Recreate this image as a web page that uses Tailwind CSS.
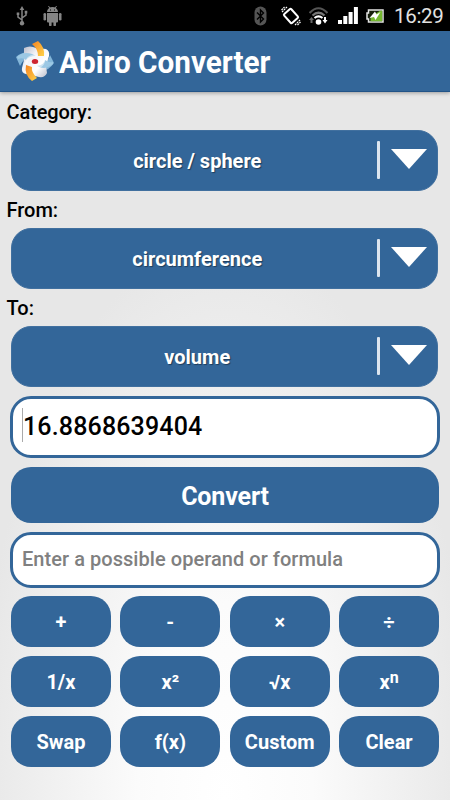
<!DOCTYPE html>
<html lang="en">
<head>
<meta charset="utf-8">
<title>Abiro Converter</title>
<script src="https://cdn.jsdelivr.net/npm/@tailwindcss/browser@4"></script>
</head>
<body class="w-[450px] h-[800px] overflow-hidden flex flex-col bg-[radial-gradient(ellipse_250px_560px_at_225px_800px,#ffffff_0%,#fbfbfb_35%,#e7e7e7_100%)] font-['Roboto','Noto_Sans',sans-serif] text-black">
<svg width="0" height="0" class="absolute"><defs>
<linearGradient id="g" x1="0" y1="0" x2="1" y2="1"><stop offset="0" stop-color="#b4b7c6"/><stop offset=".35" stop-color="#f2f2f7"/><stop offset=".65" stop-color="#fff"/><stop offset="1" stop-color="#b4b7c6"/></linearGradient>
<linearGradient id="o" x1="0" y1="0" x2="1" y2="1"><stop offset="0" stop-color="#f58220"/><stop offset="1" stop-color="#ffd34a"/></linearGradient>
</defs></svg>
<div class="h-[31px] shrink-0 bg-black flex items-center justify-between pl-4 pr-[7px]">
  <div class="flex items-center gap-[15px]">
    <svg width="12" height="20" viewBox="0 0 12 20" fill="none" stroke="#858585" stroke-width="1.5"><path d="M6 3V17M6 14L2 11V8M6 12l4-3V6"/><path d="M6 0L8.300 4H3.700ZM.7 6.500h2.600v2.600H.7zM8.700 4.800h2.600v2.600H8.700z" fill="#858585" stroke="none"/><circle cx="6" cy="17.300" r="2.200" fill="#858585" stroke="none"/></svg>
    <svg width="19" height="21" viewBox="0 0 19 21" fill="#858585"><path d="M4 7a5.500 5 0 0 1 11 0zM4 8h11v8.500a1 1 0 0 1-1 1h-1V20a1.300 1.300 0 0 1-2.600 0v-2.500H8.600V20A1.300 1.300 0 0 1 6 20v-2.500H5a1 1 0 0 1-1-1z"/><rect x="0.500" y="8" width="2.600" height="7.500" rx="1.300"/><rect x="15.900" y="8" width="2.600" height="7.500" rx="1.300"/><path d="M5.500 1L7 3.500M13.500 1L12 3.500" stroke="#858585"/><path d="M7 4.500h1v1H7zM11 4.500h1v1h-1z" fill="#000"/></svg>
  </div>
  <div class="flex items-center">
    <svg width="13" height="20" viewBox="0 0 13 20" class="mr-[15px]"><rect x="0.500" y="0.500" width="12" height="19" rx="6" fill="#555"/><path d="M3 6.500L9.500 13 6.500 16V4L9.500 7 3 13.500" fill="none" stroke="#000" stroke-width="1.400"/></svg>
    <svg width="20" height="20" viewBox="0 0 20 20" class="mr-[8px] -ml-px" fill="none" stroke="#fff"><rect x="5.200" y="4" width="9.600" height="12" rx="1.200" transform="rotate(-42 10 10)" stroke-width="2"/><path d="M1 6L6 1M0.500 4L3.500 1M14 19l5-5M16.500 19l3-3" stroke-width="1.200" stroke-dasharray="2 .7"/></svg>
    <svg width="19" height="20" viewBox="0 0 19 20" class="mr-[10px]" fill="none"><path d="M.5 7Q9.500-2.500 18.500 7" stroke="#555" stroke-width="2.200"/><path d="M3.500 9.500q6-5.500 12 0" stroke="#777" stroke-width="2.200"/><path d="M5.500 12q4-3.200 8 0" stroke="#fff" stroke-width="2.200"/><circle cx="9.500" cy="16" r="2.800" fill="#fff"/><path d="M2.500 11L5 14H3.500v3h-2v-3H0z" fill="#666"/><path d="M15 11h2v3h1.500L16 17.500 13.500 14H15z" fill="#fff"/></svg>
    <svg width="20" height="18" viewBox="0 0 20 18" class="mr-[8px]" fill="#fff"><path d="M0 13h4v4H0zM5.300 9h4v8h-4zM10.600 5h4v12h-4zM15.900 0h4v17h-4z"/></svg>
    <svg width="18" height="14" viewBox="0 0 18 14" class="mr-[10px]"><path d="M2.500 1h14.500v12H2.500V10H1V4h1.500z" fill="#171f0d" stroke="#e5e5e5" stroke-width="1.500"/><path d="M4.500 12.200V8L14 1.800h2.200v10.400z" fill="#75b830"/><path d="M3.500 9L9 2.500l1.500 3 4-2.500L9.500 11 8 8z" fill="#fff"/></svg>
    <span class="w-[49px] mt-[2px] text-[20.500px] tracking-[-0.3px] leading-none text-[#e2e2e2] whitespace-nowrap">16:29</span>
  </div>
</div>
<header class="h-[61px] shrink-0 bg-[#336699] border-b border-[#225488] flex items-center pl-4 shadow-[0_1px_4px_#0005]">
  <svg width="38" height="40" viewBox="0 0 38 40" class="shrink-0">
    <path d="M0 16Q6 10 15 12l3 5Q8 15 4 25z" fill="#83b6d9"/>
    <path d="M38 22q-7 10-16 7l-1-6q10 2 13-9z" fill="#83b6d9"/>
    <path d="M8 7Q14 4 20 7L30 8q4 2 3 7l-3 10 1 7q-2 5-8 4l-13-3q-5-1-4-6l2-8z" fill="url(#g)"/>
    <path d="M1 16Q7 10 16 13l4 2q-7 0-10 4-3-3-8-1z" fill="#9cc8e4"/><path d="M37 23q-8 7-16 2 7-1 8-6 4 3 8 2z" fill="#9cc8e4"/>
    <path d="M16 3l6-3q7 6 6 15l-6 0q0-7-6-12z" fill="url(#o)"/><path d="M10 24l6 2q-1 5 5 11l-5 3Q8 34 10 24z" fill="url(#o)"/>
    <path d="M10 23q1-9 11-8M28 17q1 9-11 10" fill="none" stroke="#fff" stroke-width="2.500" opacity=".5"/>
    <ellipse cx="19" cy="20.500" rx="3.200" ry="2.500" fill="#ce2430"/>
  </svg>
  <h1 class="ml-[5px] mt-[2px] text-[31px] leading-none font-bold text-white whitespace-nowrap origin-left scale-x-[0.958]">Abiro Converter</h1>
</header>
<main class="flex flex-col pl-[11px] pr-[11px]">
  <label class="h-[37px] pt-[8px] -ml-[4.500px] text-[20px] leading-[24px] tracking-[-0.1px] font-medium">Category:</label>
  <div class="h-[61px] w-[427px] rounded-[20px] bg-[#336699] border border-[#41709f] flex items-center text-white text-[20px] font-bold mt-[0.5px]">
    <span class="w-[364.500px] pl-[6px] pt-[2px] text-center [text-shadow:1px_1px_1px_#0006]">circle / sphere</span><i class="w-[3px] h-[38px] bg-[#dce5ef] rounded-[1px]"></i><svg width="36" height="20" class="ml-[11px] -mt-[3px]"><path d="M0 0H36L18 20Z" fill="#fff"/></svg>
  </div>
  <label class="h-[37px] pt-[7px] -ml-[4.500px] text-[20px] leading-[24px] font-medium">From:</label>
  <div class="h-[61px] w-[427px] rounded-[20px] bg-[#336699] border border-[#41709f] flex items-center text-white text-[20px] font-bold">
    <span class="w-[364.500px] pl-[6px] pt-[2px] text-center [text-shadow:1px_1px_1px_#0006]">circumference</span><i class="w-[3px] h-[38px] bg-[#dce5ef] rounded-[1px]"></i><svg width="36" height="20" class="ml-[11px] -mt-[3px]"><path d="M0 0H36L18 20Z" fill="#fff"/></svg>
  </div>
  <label class="h-[37px] pt-[7px] -ml-[4.500px] text-[20px] leading-[24px] font-medium">To:</label>
  <div class="h-[61px] w-[427px] rounded-[20px] bg-[#336699] border border-[#41709f] flex items-center text-white text-[20px] font-bold">
    <span class="w-[364.500px] pl-[6px] pt-[2px] text-center [text-shadow:1px_1px_1px_#0006]">volume</span><i class="w-[3px] h-[38px] bg-[#dce5ef] rounded-[1px]"></i><svg width="36" height="20" class="ml-[11px] -mt-[3px]"><path d="M0 0H36L18 20Z" fill="#fff"/></svg>
  </div>
  <div class="mt-[9px] -mx-px h-[62.5px] rounded-[21px] border-3 border-[#336699] bg-white flex items-center pl-[9px] text-[25px] tracking-[0.15px] font-medium"><i class="w-px h-[34px] bg-[#aaa] -mt-1"></i>16.8868639404</div>
  <div class="mt-[9px] h-[56px] rounded-[20px] bg-[#336699] flex items-center justify-center text-white text-[25px] tracking-[-0.15px] font-bold pt-[3px]">Convert</div>
  <div class="mt-[9px] -mx-px h-[55.500px] rounded-[21px] border-3 border-[#336699] bg-white flex items-center pl-[9px] pb-[2px] text-[20px] tracking-[0.05px] font-medium text-[#808080]">Enter a possible operand or formula</div>
  <div class="mt-[8.500px] grid grid-cols-4 gap-[9.500px] auto-rows-[50.500px] text-white text-[20px] font-bold *:rounded-[20px] *:bg-[#336699] *:flex *:items-center *:justify-center *:pt-[2px]">
    <div>+</div><div>-</div><div>×</div><div>÷</div>
    <div>1/x</div><div>x²</div><div>√x</div><div>x<span class="text-[16px] -mt-[9px]">n</span></div>
    <div>Swap</div><div>f(x)</div><div>Custom</div><div>Clear</div>
  </div>
</main>
</body>
</html>
